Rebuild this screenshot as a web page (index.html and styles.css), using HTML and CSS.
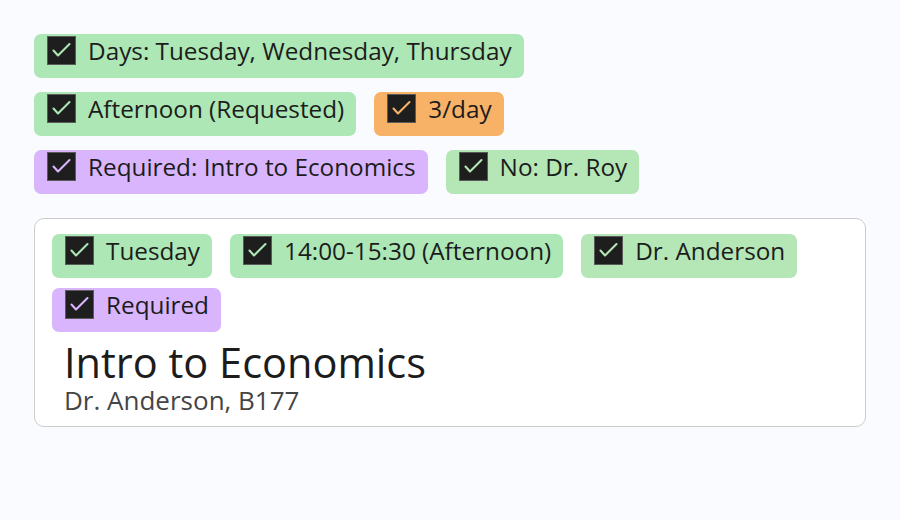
FILE: index.html
```html
<!DOCTYPE html>
<html>
<head>
<meta charset="utf-8">
<link rel="stylesheet" href="styles.css">
</head>
<body>
<div class="page">
  <div class="filters">
    <div class="row">
      <span class="chip green"><span class="box"><svg viewBox="0 0 27 27"><path d="M5.5 13.5L10 18.5 21.5 7"/></svg></span>Days: Tuesday, Wednesday, Thursday</span>
    </div>
    <div class="row">
      <span class="chip green"><span class="box"><svg viewBox="0 0 27 27"><path d="M5.5 13.5L10 18.5 21.5 7"/></svg></span>Afternoon (Requested)</span>
      <span class="chip orange"><span class="box"><svg viewBox="0 0 27 27"><path d="M5.5 13.5L10 18.5 21.5 7"/></svg></span>3/day</span>
    </div>
    <div class="row">
      <span class="chip purple"><span class="box"><svg viewBox="0 0 27 27"><path d="M5.5 13.5L10 18.5 21.5 7"/></svg></span>Required: Intro to Economics</span>
      <span class="chip lightgreen"><span class="box"><svg viewBox="0 0 27 27"><path d="M5.5 13.5L10 18.5 21.5 7"/></svg></span>No: Dr. Roy</span>
    </div>
  </div>
  <div class="card">
    <div class="card-tags">
      <div class="row">
        <span class="chip green"><span class="box"><svg viewBox="0 0 27 27"><path d="M5.5 13.5L10 18.5 21.5 7"/></svg></span>Tuesday</span>
        <span class="chip green"><span class="box"><svg viewBox="0 0 27 27"><path d="M5.5 13.5L10 18.5 21.5 7"/></svg></span>14:00-15:30 (Afternoon)</span>
        <span class="chip lightgreen"><span class="box"><svg viewBox="0 0 27 27"><path d="M5.5 13.5L10 18.5 21.5 7"/></svg></span>Dr. Anderson</span>
      </div>
      <div class="row">
        <span class="chip purple"><span class="box"><svg viewBox="0 0 27 27"><path d="M5.5 13.5L10 18.5 21.5 7"/></svg></span>Required</span>
      </div>
    </div>
    <div class="course">
      <div class="title">Intro to Economics</div>
      <div class="sub">Dr. Anderson, B177</div>
    </div>
  </div>
</div>
</body>
</html>
```
FILE: styles.css
```css
html, body {
  margin: 0;
  padding: 0;
  background: #fafbff;
}
body {
  font-family: "Open Sans", "Noto Sans", sans-serif;
  color: #1c1c1c;
}
.page {
  padding: 34px 34px 0 34px;
}
.filters {
  display: flex;
  flex-direction: column;
  gap: 14px;
}
.row {
  display: flex;
  gap: 18px;
}
.chip {
  display: inline-flex;
  align-items: flex-start;
  box-sizing: border-box;
  height: 44px;
  padding: 2px 12px 0 13px;
  border-radius: 7px;
  font-size: 24.3px;
  line-height: 30px;
  white-space: nowrap;
}
.box {
  width: 29px;
  height: 29px;
  box-sizing: border-box;
  margin-right: 12px;
  background: #1e1e1e;
  border: 1px solid #5a5a5a;
  flex: none;
  display: flex;
}
.box svg {
  width: 27px;
  height: 27px;
  fill: none;
  stroke-width: 2.1;
  stroke-linecap: round;
  stroke-linejoin: round;
}
.green { background: #ace7b5; }
.green .box svg { stroke: #ace7b5; }
.lightgreen { background: #b5e6b6; }
.lightgreen .box svg { stroke: #b5e6b6; }
.orange { background: #f7b267; }
.orange .box svg { stroke: #f7b267; }
.purple { background: #d9b5fd; }
.purple .box svg { stroke: #d9b5fd; }
.card {
  margin-top: 24px;
  background: #ffffff;
  border: 1.5px solid #cccccc;
  border-radius: 10px;
  padding: 14.5px 17px 11.5px 17px;
}
.card-tags {
  display: flex;
  flex-direction: column;
  gap: 10px;
}
.course {
  padding-left: 12px;
  margin-top: 8px;
}
.title {
  font-size: 41.5px;
  line-height: 44px;
}
.sub {
  font-size: 26px;
  line-height: 30px;
  margin-top: 1px;
  color: #454545;
}
```
